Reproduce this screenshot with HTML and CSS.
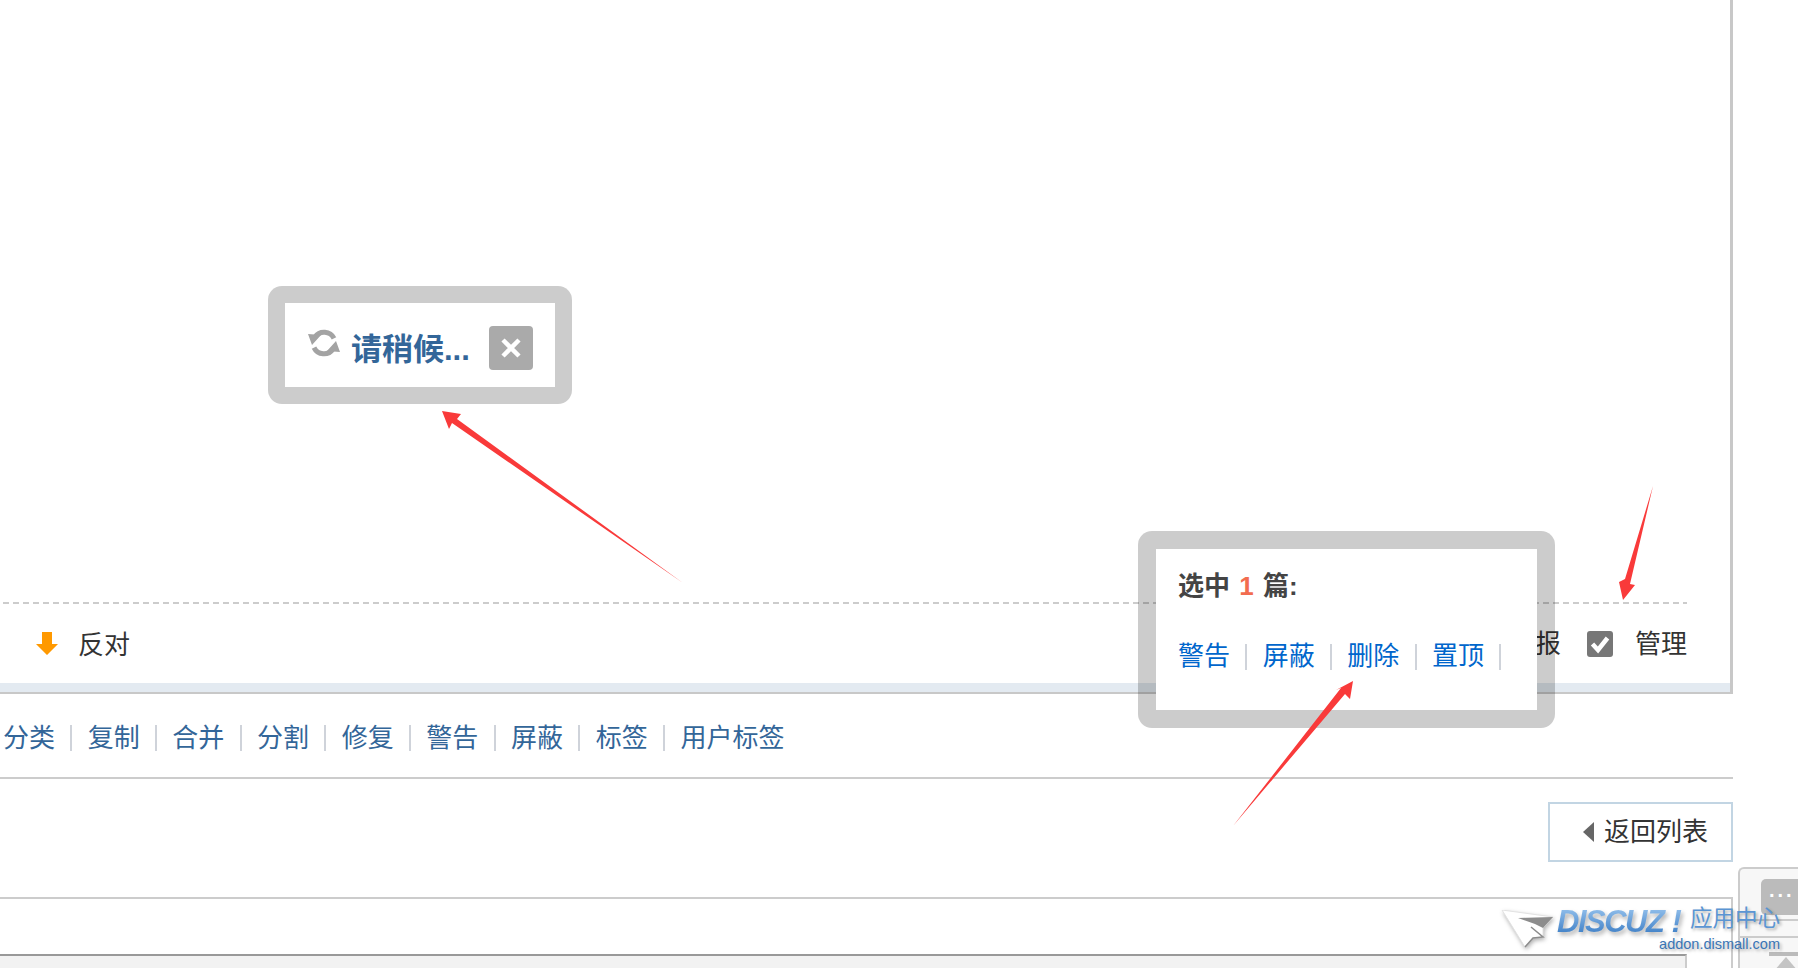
FILE: index.html
```html
<!DOCTYPE html>
<html lang="zh-CN">
<head>
<meta charset="utf-8">
<title>管理</title>
<link rel="stylesheet" href="styles.css">
</head>
<body>
<div class="page">
  <section class="post">
    <div class="post-body"></div>
    <div class="post-actions">
      <div class="action-left">
        <svg class="down-icon" width="22" height="24" viewBox="0 0 22 24"><path d="M6 0h10v12h6L11 23 0 12h6z" fill="#f90"/></svg>
        <span>反对</span>
      </div>
      <div class="action-right">
        <span>举报</span>
        <span class="check"><svg width="26" height="26" viewBox="0 0 26 26"><path d="M5.500 13l5.500 6 9.500-12" fill="none" stroke="#fff" stroke-width="4.500"/></svg></span>
        <span>管理</span>
      </div>
    </div>
    <div class="post-band"></div>
  </section>

  <nav class="mod-links">
    <a>分类</a><i class="sep"></i><a>复制</a><i class="sep"></i><a>合并</a><i class="sep"></i><a>分割</a><i class="sep"></i><a>修复</a><i class="sep"></i><a>警告</a><i class="sep"></i><a>屏蔽</a><i class="sep"></i><a>标签</a><i class="sep"></i><a>用户标签</a>
  </nav>

  <div class="back-row">
    <a class="back-btn"><i class="back-arrow"></i>返回列表</a>
  </div>

  <section class="reply-wrap">
    <div class="reply-box"></div>
  </section>
</div>

<div class="dialog dialog-wait">
  <svg class="spin" width="34" height="30" viewBox="0 0 34 30"><g fill="none" stroke="#a3a3a3" stroke-width="5"><path d="M27 10.400A11 11 0 0 0 8 9"/><path d="M7 19.600A11 11 0 0 0 26 21"/></g><path d="M1 6l13 1-9 10zM33 24l-13-1 9-10z" fill="#a3a3a3"/></svg>
  <strong class="wait-text">请稍候...</strong>
  <span class="close"><svg width="24" height="24" viewBox="0 0 24 24"><path d="M4 4l16 16M20 4L4 20" stroke="#fff" stroke-width="4.500"/></svg></span>
</div>

<div class="dialog dialog-select">
  <div class="select-title">选中 <em>1</em> 篇:</div>
  <div class="select-links">
    <a>警告</a><i class="sep"></i><a>屏蔽</a><i class="sep"></i><a>删除</a><i class="sep"></i><a>置顶</a><i class="sep"></i>
  </div>
</div>

<svg class="arrows" width="1798" height="968" viewBox="0 0 1798 968">
  <path d="M442 411L461 414L457 419L683 583L452 423L449 429z" fill="#f93a3a"/>
  <path d="M1353 681L1350 699L1345 694L1233 826L1341 688L1336 690z" fill="#f93a3a"/>
  <path d="M1623 600L1619 582L1625 579L1653 486L1630 584L1635 585z" fill="#f93a3a"/>
</svg>

<aside class="side-tool">
  <div class="side-tile">...</div>
  <div class="side-line"></div>
  <div class="side-line"></div>
  <div class="side-bar"></div>
  <i class="side-up"></i>
</aside>

<div class="watermark">
  <svg class="wm-plane" width="70" height="46" viewBox="0 0 70 46"><path d="M1 0L52 7 42 18 42 27 32 28 24 37z" fill="#fff" stroke="#e2e2e2"/><path d="M17 8L52 7 42 18 34 14z" fill="#8c8c8c"/><path d="M30 17L42 27 32 28 24 37" fill="none" stroke="#8c8c8c" stroke-width="1.500"/></svg>
  <span class="wm-logo">DISCUZ<span class="wm-bang">!</span></span>
  <div class="wm-right">
    <span class="wm-cn">应用中心</span>
    <span class="wm-url">addon.dismall.com</span>
  </div>
</div>
</body>
</html>
```
FILE: styles.css
```css
* { box-sizing: border-box; }
html, body { margin: 0; padding: 0; height: 968px; overflow: hidden; background: #fff; }
body { font-family: "Liberation Sans", "Noto Sans CJK SC", sans-serif; font-size: 26px; color: #333; }
a { text-decoration: none; }
i, em { font-style: normal; }

.page { width: 1733px; height: 968px; display: flex; flex-direction: column; }

.post { flex: none; height: 694px; border-right: 3px solid #c8c8c8; border-bottom: 2px solid #c8c8c8; display: flex; flex-direction: column; }
.post-body { flex: none; height: 602px; }
.post-actions { flex: none; margin-left: 3px; margin-right: 43px; height: 80px; padding: 2px 0 0 33px; background: repeating-linear-gradient(90deg, #ccc 0 6px, transparent 6px 10px) top left / 100% 2px no-repeat; display: flex; justify-content: space-between; align-items: center; line-height: 36px; }
.post-band { flex: none; height: 9px; margin-top: 1px; background: #e3eaf1; }
.action-left { display: flex; align-items: center; gap: 20px; }
.action-left span { margin-top: 3px; }
.down-icon { margin-top: 1px; }
.action-right { display: flex; align-items: center; gap: 24px; }
.action-right span { margin-top: 2px; }
.action-right .check { margin: 2px -2px 0 2px; width: 26px; height: 26px; background: #777; border-radius: 3px; display: block; }
.check svg { display: block; }

.mod-links { flex: none; height: 85px; border-bottom: 2px solid #ccc; padding: 3px 0 0 3px; display: flex; align-items: center; color: #369; line-height: 36px; }
.mod-links a { margin-top: 1px; }
.sep { display: block; width: 2px; height: 26px; background: #cfd3da; margin: 2px 15.330px 0; }

.back-row { flex: none; height: 118px; display: flex; justify-content: flex-end; padding-top: 23px; }
.back-btn { width: 185px; height: 60px; border: 2px solid #c2d5e3; display: flex; align-items: center; padding-left: 33px; color: #333; line-height: 36px; }
.back-arrow { width: 0; height: 0; border-style: solid; border-width: 10px 11px 10px 0; border-color: transparent #666 transparent transparent; margin-right: 10px; }

.reply-wrap { flex: none; height: 71px; border-top: 2px solid #ccc; border-right: 2px solid #ccc; padding-top: 55px; }
.reply-box { height: 14px; width: 1687px; background: #f2f2f2; border-top: 2px solid #999; border-right: 2px solid #ccc; }

.dialog { position: absolute; background: #fff; background-clip: padding-box; border-style: solid; border-color: rgba(0, 0, 0, .2); border-radius: 14px; }
.dialog-wait { left: 268px; top: 286px; width: 304px; height: 118px; border-width: 17px; display: flex; align-items: center; }
.spin { margin: -4px 0 0 22px; flex: none; }
.wait-text { margin: 9px 0 0 10px; width: 138px; font-size: 31px; line-height: 40px; color: #369; font-weight: 700; white-space: nowrap; }
.close { width: 44px; height: 44px; margin-top: 5px; background: #aaa; border-radius: 4px; display: flex; align-items: center; justify-content: center; }

.dialog-select { left: 1138px; top: 531px; width: 417px; height: 197px; border-width: 18px; padding: 19px 0 0 22px; }
.select-title { font-weight: 700; color: #444; line-height: 36px; height: 36px; word-spacing: 2px; }
.select-title em { color: #f26c4f; }
.select-links { margin-top: 34px; display: flex; align-items: center; color: #06c; line-height: 36px; }

.arrows { position: absolute; left: 0; top: 0; pointer-events: none; }

.side-tool { position: absolute; left: 1738px; top: 867px; width: 60px; height: 101px; background: #f7f7f7; border: 2px solid #ccc; border-right: 0; border-bottom: 0; border-top-left-radius: 6px; padding: 10px 0 0 21px; overflow: hidden; }
.side-tile { width: 40px; height: 36px; background: #bbb; border-radius: 5px 0 0 5px; color: #fff; font: 700 20px/22px "Liberation Sans", sans-serif; letter-spacing: 3px; padding-left: 8px; }
.side-line { margin: 4px 0 0 -21px; height: 2px; background: #ccc; }
.side-line + .side-line { margin-top: 15px; }
.side-bar { margin: 14px 0 0 8px; height: 4px; background: #bbb; }
.side-up { display: block; margin: 1px 0 0 13px; width: 0; height: 0; border-style: solid; border-width: 0 12px 14px; border-color: transparent transparent #c4c4c4; }

.watermark { position: absolute; left: 1501px; top: 904px; width: 290px; height: 60px; display: flex; align-items: flex-start; }
.wm-plane { margin-top: 6px; flex: none; filter: drop-shadow(1px 2px 2px rgba(0, 0, 0, .3)); }
.wm-logo { margin: 5px 0 0 -14px; font: italic 700 31px/26px "Liberation Sans", sans-serif; color: transparent; background: linear-gradient(#8fbdea, #3d7ec6); -webkit-background-clip: text; background-clip: text; letter-spacing: -1.500px; filter: drop-shadow(2px 3px 2px rgba(0, 0, 0, .3)); padding-right: 2px; }
.wm-bang { margin-left: 8px; }
.wm-right { position: absolute; right: 11px; top: 1px; display: flex; flex-direction: column; align-items: flex-end; }
.wm-cn { font-size: 22.500px; line-height: 28px; color: #5b95d3; text-shadow: 2px 2px 3px rgba(0, 0, 0, .3); }
.wm-url { font-size: 14.500px; line-height: 16px; color: #3a75b5; margin-top: 3px; text-shadow: 2px 2px 3px rgba(0, 0, 0, .3); }
```
